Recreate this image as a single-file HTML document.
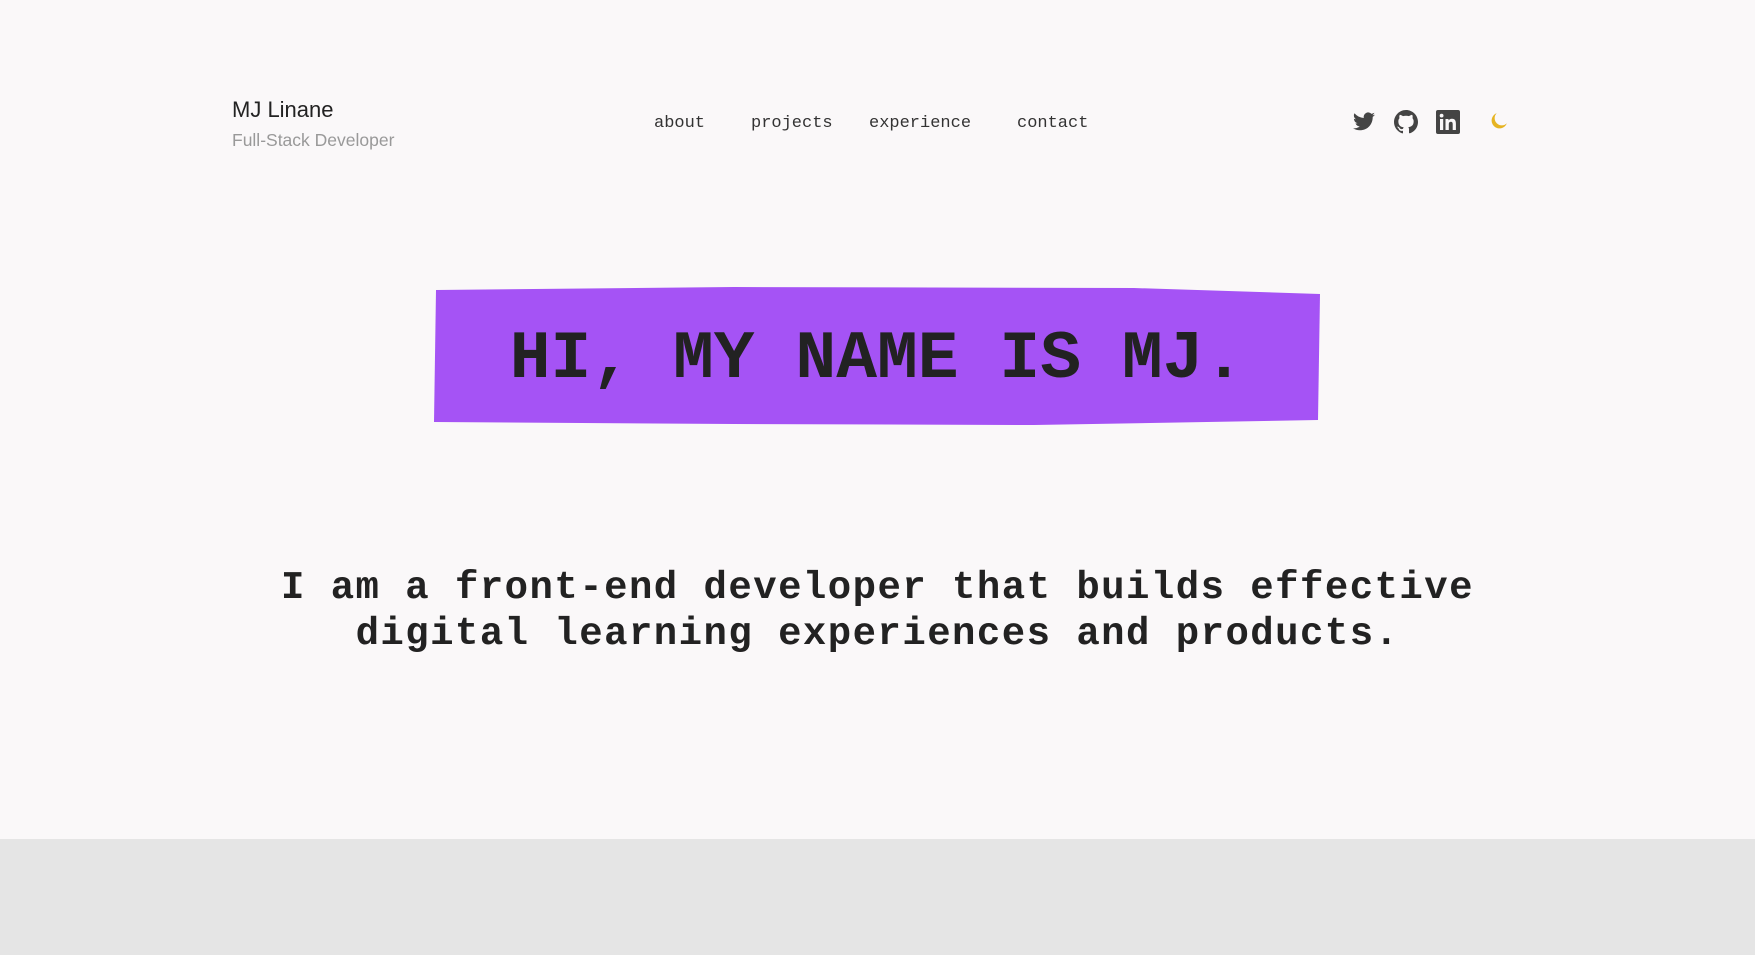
<!DOCTYPE html>
<html><head><style>
html,body{margin:0;padding:0;}
body{width:1755px;height:955px;background:#faf8f9;position:relative;overflow:hidden;font-family:"Liberation Sans",sans-serif;color:#222;}
.name{position:absolute;left:232px;top:97px;font-size:22px;color:#222;}
.sub{position:absolute;left:232px;top:130px;font-size:17.5px;color:#999;}
.nav a{position:absolute;top:114px;font-family:"Liberation Mono",monospace;font-size:17px;color:#333;text-decoration:none;}
.ic{position:absolute;top:110px;}
.box{position:absolute;left:434px;top:287px;width:886px;height:140px;}
.hi{position:absolute;left:434px;width:886px;top:321px;text-align:center;font-family:"Liberation Mono",monospace;font-weight:bold;font-size:68px;color:#222;}
.tag{position:absolute;left:0;width:1755px;top:565px;text-align:center;font-family:"Liberation Mono",monospace;font-weight:bold;font-size:39px;letter-spacing:1.45px;line-height:46px;color:#222;}
.foot{position:absolute;left:0;top:839px;width:1755px;height:116px;background:#e5e5e5;}
</style></head><body>
<div class="name">MJ Linane</div>
<div class="sub">Full-Stack Developer</div>
<div class="nav">
<a style="left:654px">about</a><a style="left:751px">projects</a><a style="left:869px">experience</a><a style="left:1017px">contact</a>
</div>
<svg class="ic" style="left:1352px" width="24" height="24" viewBox="0 0 24 24"><path fill="#444" d="M23 4.6a9 9 0 0 1-2.6.7 4.5 4.5 0 0 0 2-2.5 9 9 0 0 1-2.9 1.1 4.5 4.5 0 0 0-7.7 4.1A12.8 12.8 0 0 1 2.5 3.3a4.5 4.5 0 0 0 1.4 6 4.5 4.5 0 0 1-2-.6 4.5 4.5 0 0 0 3.6 4.5 4.5 4.5 0 0 1-2 .1 4.5 4.5 0 0 0 4.2 3.1A9 9 0 0 1 1 18.3 12.8 12.8 0 0 0 7.9 20.3c8.3 0 12.8-6.9 12.8-12.8v-.6A9 9 0 0 0 23 4.6z"/></svg>
<svg class="ic" style="left:1394px" width="24" height="24" viewBox="0 0 16 16"><path fill="#444" d="M8 0C3.6 0 0 3.6 0 8c0 3.5 2.3 6.5 5.5 7.6.4.1.5-.2.5-.4v-1.4c-2.200.5-2.7-1-2.7-1-.4-.9-.9-1.200-.9-1.200-.7-.5.1-.5.1-.5.8.1 1.200.8 1.200.8.7 1.200 1.9.9 2.300.7.1-.5.3-.9.5-1.100-1.800-.2-3.600-.9-3.600-4 0-.9.3-1.600.8-2.100-.1-.2-.4-1 .1-2.100 0 0 .7-.2 2.200.8.6-.2 1.300-.3 2-.3s1.400.1 2 .3c1.500-1 2.200-.8 2.200-.8.4 1.100.2 1.900.1 2.100.5.6.8 1.300.8 2.100 0 3.100-1.900 3.700-3.600 3.900.3.3.5.8.5 1.500v2.200c0 .2.1.5.6.4C13.700 14.500 16 11.500 16 8c0-4.400-3.600-8-8-8z"/></svg>
<svg class="ic" style="left:1436px" width="24" height="24" viewBox="0 0 24 24"><rect width="24" height="24" rx="2" fill="#444"/><rect x="4" y="9" width="3.2" height="11" fill="#faf8f9"/><circle cx="5.6" cy="5.6" r="1.9" fill="#faf8f9"/><path fill="#faf8f9" d="M9.5 9h3v1.5c.5-.9 1.7-1.8 3.4-1.8 3.4 0 4 2.2 4 5.1V20h-3.2v-5.4c0-1.3 0-2.9-1.8-2.9s-2.1 1.4-2.1 2.8V20H9.5z"/></svg>
<svg class="ic" style="left:1490px;top:112px" width="18" height="18" viewBox="0 0 16 16"><path fill="#e6b422" d="M6 1a7 7 0 1 0 9 9 6 6 0 0 1-9-9z"/></svg>
<svg class="box" viewBox="0 0 886 140" preserveAspectRatio="none"><polygon points="2,3 300,0 700,1 886,7 884,133 600,138 300,137 0,135" fill="#a553f5"/></svg>
<div class="hi">HI, MY NAME IS MJ.</div>
<div class="tag">I am a front-end developer that builds effective<br>digital learning experiences and products.</div>
<div class="foot"></div>
</body></html>
